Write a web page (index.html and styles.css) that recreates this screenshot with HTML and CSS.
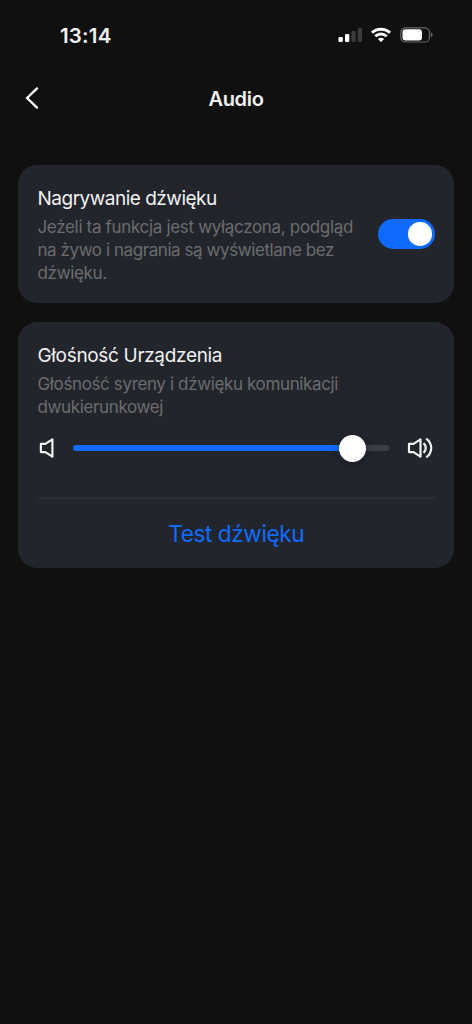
FILE: index.html
```html
<!DOCTYPE html>
<html lang="pl">
<head>
<meta charset="utf-8">
<title>Audio</title>
<link rel="stylesheet" href="styles.css">
</head>
<body>
<div class="status">
  <span class="time">13:14</span>
  <div class="indicators">
    <svg width="24" height="16" viewBox="0 0 24 16">
      <rect x="0.5" y="10" width="4.3" height="5" rx="1.2" fill="#fff"/>
      <rect x="7" y="7" width="4.3" height="8" rx="1.2" fill="#fff"/>
      <rect x="13.4" y="4" width="4.3" height="11" rx="1.2" fill="#3b3b3b"/>
      <rect x="19.7" y="0.8" width="4.3" height="14.2" rx="1.2" fill="#3b3b3b"/>
    </svg>
    <svg class="wifi" width="20" height="16" viewBox="0 0 20 16">
      <g fill="none" stroke="#fff" stroke-width="2.9">
        <path d="M1 5.8C6 1 14 1 19 5.8"/>
        <path d="M4.3 9.3c3.3-3 8.1-3 11.4 0"/>
      </g>
      <path d="M10 15l-3.1-3.1c1.8-1.5 4.4-1.5 6.2 0z" fill="#fff"/>
    </svg>
    <svg class="battery" width="34" height="16" viewBox="0 0 34 16">
      <rect x="0.8" y="0.8" width="28.7" height="14.2" rx="4.6" fill="none" stroke="#68686a" stroke-width="1.2"/>
      <rect x="2.5" y="2.3" width="19.5" height="11.2" rx="3" fill="#fff"/>
      <path d="M31 5.6c2.1.7 2.1 3.9 0 4.6z" fill="#68686a"/>
    </svg>
  </div>
</div>
<header class="nav">
  <svg class="back" width="14" height="22" viewBox="0 0 14 22"><path d="M12 1.4L2.1 11 12 20.6" fill="none" stroke="#fff" stroke-width="2.3" stroke-linecap="round"/></svg>
  <h1 class="title">Audio</h1>
</header>
<main class="content">
  <section class="card recording">
    <div class="copy">
      <h2 class="heading">Nagrywanie dźwięku</h2>
      <p class="desc">Jeżeli ta funkcja jest wyłączona, podgląd<br><span class="tight">na żywo i nagrania są wyświetlane bez</span><br>dźwięku.</p>
    </div>
    <div class="toggle"><span class="knob"></span></div>
  </section>
  <section class="card volume">
    <h2 class="heading heading-volume">Głośność Urządzenia</h2>
    <p class="desc desc-volume">Głośność syreny i dźwięku komunikacji<br>dwukierunkowej</p>
    <div class="slider-row">
      <svg width="16" height="22" viewBox="0 0 16 22"><path d="M2.9 6.9H7.3L14.4 2.3V19.7L7.3 15.1H2.9Z" fill="none" stroke="#f1f1f2" stroke-width="2.2" stroke-linejoin="round"/></svg>
      <div class="track"><div class="fill"></div><div class="thumb"></div></div>
      <svg class="loud" width="27" height="22" viewBox="0 0 27 22">
        <g fill="none" stroke="#f1f1f2" stroke-width="2.2" stroke-linejoin="round">
          <path d="M2 6.9H6.5L13.5 2.3V19.7L6.5 15.1H2Z"/>
          <path d="M16.5 6.1c3 2.6 3 7.2 0 9.8"/>
          <path d="M19.2 1.6C25.9 6.5 25.9 15.5 19.2 20.4"/>
        </g>
      </svg>
    </div>
    <div class="test">Test dźwięku</div>
  </section>
</main>
</body>
</html>
```

FILE: styles.css
```css
* { box-sizing: border-box; }
body {
  margin: 0;
  height: 1024px;
  overflow: hidden;
  background: #101010;
  color: #f1f1f2;
  font-family: Inter, "Liberation Sans", sans-serif;
}
h1, h2, p { margin: 0; }
svg { display: block; flex: none; }
.status {
  height: 70px;
  padding: 0 38px 0 60px;
  display: flex;
  align-items: center;
  justify-content: space-between;
}
.time { padding-top: 1px; font-size: 20.5px; font-weight: 600; line-height: 24px; letter-spacing: 0.2px; }
.indicators { display: flex; align-items: center; }
.wifi { margin-left: 9px; }
.battery { margin-left: 9px; }
.nav {
  height: 58px;
  padding: 0 25px;
  display: grid;
  grid-template-columns: 14px 1fr 14px;
  align-items: center;
}
.back { margin-top: -3px; }
.title { text-align: center; font-size: 20px; font-weight: 600; line-height: 24px; letter-spacing: -0.3px; }
.content {
  padding: 37px 18px 0;
  display: flex;
  flex-direction: column;
  gap: 19px;
}
.card { border-radius: 19px; background: #22252c; }
.recording {
  height: 138px;
  padding: 20px 19px 0 19.5px;
  display: flex;
  justify-content: space-between;
}
.heading {
  padding-top: 1px;
  font-size: 19px;
  line-height: 26px;
  font-weight: 400;
  letter-spacing: -0.5px;
  white-space: nowrap;
}
.heading-volume { letter-spacing: -0.33px; }
.desc {
  margin-top: 4px;
  font-size: 17px;
  line-height: 23px;
  letter-spacing: -0.33px;
  color: #6c6c6e;
  white-space: nowrap;
}
.tight { letter-spacing: -0.43px; }
.desc-volume { letter-spacing: -0.37px; }
.toggle {
  flex: none;
  width: 57px;
  height: 30px;
  margin-top: 34px;
  padding: 0 3.5px;
  display: flex;
  align-items: center;
  justify-content: flex-end;
  border-radius: 15px;
  background: #0f6bff;
}
.knob { width: 23.5px; height: 23.5px; border-radius: 50%; background: #fff; }
.volume { height: 246px; padding: 20px 19px 0 19.5px; }
.slider-row { display: flex; align-items: center; height: 28px; margin-top: 15px; }
.track {
  position: relative;
  width: 316px;
  height: 6px;
  margin-left: 19.5px;
  border-radius: 3px;
  background: #3d3f46;
}
.fill { width: 280px; height: 6px; border-radius: 3px; background: #0f6bff; }
.thumb {
  position: absolute;
  left: 266px;
  top: -10.5px;
  width: 27px;
  height: 27px;
  border-radius: 50%;
  background: #fff;
  box-shadow: 0 2px 12px rgba(0, 0, 0, 0.35);
}
.loud { margin-left: 18px; }
.test {
  margin-top: 35px;
  height: 70px;
  border-top: 2px solid #2c2e32;
  text-align: center;
  font-size: 22.7px;
  line-height: 70px;
  letter-spacing: -0.45px;
  color: #0f6bff;
}
```
